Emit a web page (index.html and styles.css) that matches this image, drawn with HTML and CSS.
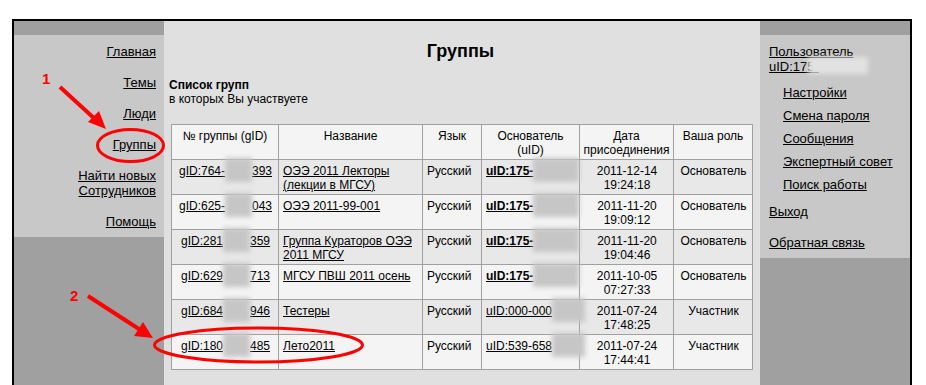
FILE: index.html
```html
<!DOCTYPE html>
<html lang="ru">
<head>
    <meta charset="UTF-8">
    <title>Группы</title>
    <link rel="stylesheet" href="styles.css">
</head>
<body>
    <div class="frame">
        <div class="side side-left">
            <div class="side-strip"></div>
            <div class="side-menu">
                <a href="#">Главная</a>
                <a href="#">Темы</a>
                <a href="#">Люди</a>
                <a href="#">Группы</a>
                <a href="#">Найти новых<br>Сотрудников</a>
                <a href="#">Помощь</a>
            </div>
        </div>

        <div class="main">
            <h1>Группы</h1>
            <div class="caption">
                <strong>Список групп</strong><br>
                в которых Вы участвуете
            </div>
            <table class="groups">
                <colgroup>
                    <col class="c-id"><col class="c-name"><col class="c-lang"><col class="c-owner"><col class="c-date"><col class="c-role">
                </colgroup>
                <tr class="head">
                    <th>№ группы (gID)</th>
                    <th>Название</th>
                    <th>Язык</th>
                    <th>Основатель<br>(uID)</th>
                    <th>Дата<br>присоединения</th>
                    <th>Ваша роль</th>
                </tr>
                <tr>
                    <td class="center"><a href="#">gID:764-<span class="blur blur-id"></span>393</a></td>
                    <td><a href="#">ОЭЭ 2011 Лекторы<br>(лекции в МГСУ)</a></td>
                    <td>Русский</td>
                    <td><a href="#" class="bold">uID:175-</a><span class="blur blur-uid"></span></td>
                    <td class="center">2011-12-14<br>19:24:18</td>
                    <td class="center">Основатель</td>
                </tr>
                <tr>
                    <td class="center"><a href="#">gID:625-<span class="blur blur-id"></span>043</a></td>
                    <td><a href="#">ОЭЭ 2011-99-001</a></td>
                    <td>Русский</td>
                    <td><a href="#" class="bold">uID:175-</a><span class="blur blur-uid"></span></td>
                    <td class="center">2011-11-20<br>19:09:12</td>
                    <td class="center">Основатель</td>
                </tr>
                <tr>
                    <td class="center"><a href="#">gID:281<span class="blur blur-id"></span>359</a></td>
                    <td><a href="#">Группа Кураторов ОЭЭ<br>2011 МГСУ</a></td>
                    <td>Русский</td>
                    <td><a href="#" class="bold">uID:175-</a><span class="blur blur-uid"></span></td>
                    <td class="center">2011-11-20<br>19:04:46</td>
                    <td class="center">Основатель</td>
                </tr>
                <tr>
                    <td class="center"><a href="#">gID:629<span class="blur blur-id"></span>713</a></td>
                    <td><a href="#">МГСУ ПВШ 2011 осень</a></td>
                    <td>Русский</td>
                    <td><a href="#" class="bold">uID:175-</a><span class="blur blur-uid"></span></td>
                    <td class="center">2011-10-05<br>07:27:33</td>
                    <td class="center">Основатель</td>
                </tr>
                <tr>
                    <td class="center"><a href="#">gID:684<span class="blur blur-id"></span>946</a></td>
                    <td><a href="#">Тестеры</a></td>
                    <td>Русский</td>
                    <td><a href="#">uID:000-000</a><span class="blur blur-uid2"></span></td>
                    <td class="center">2011-07-24<br>17:48:25</td>
                    <td class="center">Участник</td>
                </tr>
                <tr>
                    <td class="center"><a href="#">gID:180<span class="blur blur-id"></span>485</a></td>
                    <td><a href="#">Лето2011</a></td>
                    <td>Русский</td>
                    <td><a href="#">uID:539-658</a><span class="blur blur-uid2"></span></td>
                    <td class="center">2011-07-24<br>17:44:41</td>
                    <td class="center">Участник</td>
                </tr>
            </table>
        </div>

        <div class="side side-right">
            <div class="side-strip"></div>
            <div class="user-menu">
                <a href="#" class="user">Пользователь<br>uID:175-</a><span class="blur blur-user"></span>
                <div class="sub">
                    <a href="#">Настройки</a>
                    <a href="#">Смена пароля</a>
                    <a href="#">Сообщения</a>
                    <a href="#">Экспертный совет</a>
                    <a href="#">Поиск работы</a>
                </div>
                <a href="#" class="exit">Выход</a>
                <a href="#" class="feedback">Обратная связь</a>
            </div>
        </div>
    </div>

    <!-- red annotations drawn over the screenshot -->
    <svg class="marks" width="926" height="385" viewBox="0 0 926 385">
        <text x="42" y="84" class="num">1</text>
        <line x1="60" y1="87" x2="96" y2="120" />
        <polygon points="106,129 88,122 99,111" />
        <ellipse cx="130.5" cy="145.5" rx="33" ry="16" />

        <text x="70" y="301" class="num">2</text>
        <line x1="88" y1="296" x2="142" y2="331" />
        <polygon points="153,338 134,336 143,322" />
        <ellipse cx="258.5" cy="345" rx="104" ry="17" />
    </svg>
</body>
</html>
```

FILE: styles.css
```css
body {
    margin: 0;
    background: #fff;
    font-family: "Liberation Sans", Arial, sans-serif;
    font-size: 12px;
    color: #000;
}
a {
    color: #000;
    text-decoration: underline;
}
.frame {
    display: grid;
    grid-template-columns: 150px 596px 150px;
    width: 896px;
    height: 420px;
    margin: 19px 0 0 12px;
    border: 2px solid #000;
    border-bottom: none;
}
.side {
    background: #a0a0a0;
    font-size: 13px;
    line-height: 15px;
}
.side-strip {
    height: 14px;
}
.side-menu {
    display: flex;
    flex-direction: column;
    align-items: flex-end;
    gap: 16px;
    padding: 9px 8px 8px 0;
    background: #c8c8c8;
    text-align: right;
}
.user-menu {
    display: flex;
    flex-direction: column;
    align-items: flex-start;
    padding: 9px 0 8px 9px;
    background: #c8c8c8;
    position: relative;
}
.sub {
    display: flex;
    flex-direction: column;
    align-items: flex-start;
    gap: 8px;
    margin-top: 11px;
    padding-left: 14px;
}
.exit {
    margin-top: 12px;
}
.feedback {
    margin-top: 16px;
}
.main {
    background: #e0e0e0;
    padding: 19px 8px 0 5px;
}
h1 {
    margin: 0;
    font-size: 18px;
    line-height: 22px;
    text-align: center;
}
.caption {
    margin-top: 16px;
    line-height: 14px;
}
.groups {
    margin: 18px 0 0 2px;
    width: 581px;
    table-layout: fixed;
    border-collapse: collapse;
    line-height: 14px;
}
.c-id { width: 107px; }
.c-name { width: 144px; }
.c-lang { width: 59px; }
.c-owner { width: 98px; }
.c-date { width: 94px; }
.c-role { width: 79px; }
.groups th,
.groups td {
    border: 1px solid #a0a0a0;
    padding: 4px 3px 2px 4px;
    height: 28px;
    vertical-align: top;
    text-align: left;
    white-space: nowrap;
    overflow: visible;
}
.groups th {
    font-weight: normal;
    text-align: center;
    padding-left: 2px;
    padding-right: 2px;
}
.groups tr {
    background: #f4f4f4;
}
.groups tr:nth-child(even) {
    background: #e8e8e8;
}
.groups .center {
    text-align: center;
}
.bold {
    font-weight: bold;
}
.blur {
    display: inline-block;
    vertical-align: top;
    background: #c6c6c6;
    filter: blur(2.5px);
    height: 24px;
    margin: -6px 0 -4px;
}
.blur-id {
    width: 27px;
}
.blur-uid {
    width: 46px;
}
.blur-uid2 {
    width: 33px;
}
.blur-user {
    position: absolute;
    left: 48px;
    top: 22px;
    width: 60px;
    height: 17px;
    margin: 0;
    background: #e2e2e2;
}
.marks {
    position: absolute;
    left: 0;
    top: 0;
    pointer-events: none;
}
.marks line {
    stroke: #ff0000;
    stroke-width: 4;
}
.marks polygon {
    fill: #ff0000;
}
.marks ellipse {
    fill: none;
    stroke: #ff0000;
    stroke-width: 3;
}
.marks .num {
    fill: #ff0000;
    font-family: "Liberation Sans", Arial, sans-serif;
    font-size: 15px;
    font-weight: bold;
}
```
